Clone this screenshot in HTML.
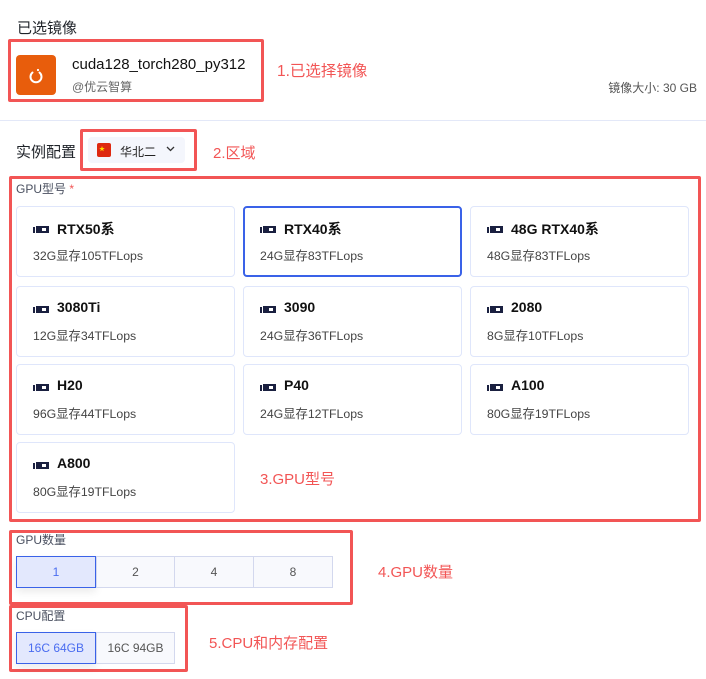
<!DOCTYPE html>
<html><head><meta charset="utf-8"><style>
*{margin:0;padding:0;box-sizing:border-box}
body{width:706px;height:679px;background:#fff;position:relative;overflow:hidden;font-family:"Liberation Sans","Noto Sans CJK SC",sans-serif;color:#1f2329}
.a{position:absolute;white-space:nowrap}
.red{position:absolute;border:3px solid #f25555;border-radius:2px}
.rl{position:absolute;color:#f25555;font-size:15px;white-space:nowrap}
.card{position:absolute;width:219px;height:71px;border:1px solid #dfe6fb;border-radius:4px;background:#fff}
.card.sel{border:2px solid #3a62e8}
.card .t{position:absolute;left:40px;top:12px;font-size:14px;font-weight:bold;color:#111}
.card .s{position:absolute;left:16px;top:39px;font-size:12.3px;color:#444}
.card .ic{position:absolute;left:16px;top:19px;width:17px;height:7px}
.card.sel .t{left:39px;top:11px}.card.sel .s{left:15px;top:38px}.card.sel .ic{left:15px;top:18px}
.btn{position:absolute;height:32px;border:1px solid #d3d8ee;background:#f8f9fd;font-size:12px;color:#555;text-align:center;line-height:30px;font-family:"Liberation Sans",sans-serif}
.btn.on{background:#e3e8fd;border:1px solid #3a62e8;color:#4a6cf0;box-shadow:0 4px 8px rgba(0,0,0,.08)}
.lab{position:absolute;font-size:12px;color:#4a5060}
</style></head><body>
<div class="a" style="left:17px;top:17px;font-size:15px">已选镜像</div>
<div class="red" style="left:8px;top:39px;width:256px;height:63px"></div>
<div class="a" style="left:16px;top:55px;width:40px;height:40px;background:#e85d0c;border-radius:4px">
<svg width="40" height="40" viewBox="0 0 40 40"><path d="M16.5 17.5a5.5 5.5 0 1 0 7 0" fill="none" stroke="#fff" stroke-width="2" stroke-linecap="round"/><circle cx="22" cy="15" r="1.1" fill="#fff"/></svg></div>
<div class="a" style="left:72px;top:56px;font-size:15px;color:#111">cuda128_torch280_py312</div>
<div class="a" style="left:72px;top:78px;font-size:12px;color:#666">@优云智算</div>
<div class="rl" style="left:277px;top:59px;font-size:15.5px">1.已选择镜像</div>
<div class="a" style="right:9px;top:79px;font-size:12px;color:#555">镜像大小: 30 GB</div>
<div class="a" style="left:0;top:120px;width:706px;height:1px;background:#e3e8f8"></div>
<div class="a" style="left:16px;top:141px;font-size:15px">实例配置</div>
<div class="red" style="left:80px;top:129px;width:117px;height:42px"></div>
<div class="a" style="left:88px;top:137px;width:97px;height:26px;background:#f4f6fc;border-radius:4px"></div>
<div class="a" style="left:97px;top:143px;width:14px;height:14px;background:#de2910;border-radius:2px"><span style="position:absolute;left:2px;top:1px;color:#ffde00;font-size:6px">★</span></div>
<div class="a" style="left:120px;top:143px;font-size:12px;color:#222">华北二</div>
<svg class="a" style="left:166px;top:146px" width="9" height="6" viewBox="0 0 9 6"><path d="M1 1l3.5 3.5L8 1" fill="none" stroke="#333" stroke-width="1.3"/></svg>
<div class="rl" style="left:213px;top:142px">2.区域</div>
<div class="red" style="left:9px;top:176px;width:692px;height:346px"></div>
<div class="lab" style="left:16px;top:180px;font-size:12px">GPU型号 <span style="color:#f25555">*</span></div>

<div class="card" style="left:16px;top:206px"><svg class="ic" viewBox="0 0 17 7"><rect x="0" y="1" width="2" height="6" fill="#1a2040"/><rect x="3" y="0" width="13" height="7" fill="#1a2040"/><rect x="9" y="2" width="4" height="3" fill="#fff"/></svg><div class="t">RTX50系</div><div class="s">32G显存105TFLops</div></div>
<div class="card sel" style="left:243px;top:206px"><svg class="ic" viewBox="0 0 17 7"><rect x="0" y="1" width="2" height="6" fill="#1a2040"/><rect x="3" y="0" width="13" height="7" fill="#1a2040"/><rect x="9" y="2" width="4" height="3" fill="#fff"/></svg><div class="t">RTX40系</div><div class="s">24G显存83TFLops</div></div>
<div class="card" style="left:470px;top:206px"><svg class="ic" viewBox="0 0 17 7"><rect x="0" y="1" width="2" height="6" fill="#1a2040"/><rect x="3" y="0" width="13" height="7" fill="#1a2040"/><rect x="9" y="2" width="4" height="3" fill="#fff"/></svg><div class="t">48G RTX40系</div><div class="s">48G显存83TFLops</div></div>

<div class="card" style="left:16px;top:286px"><svg class="ic" viewBox="0 0 17 7"><rect x="0" y="1" width="2" height="6" fill="#1a2040"/><rect x="3" y="0" width="13" height="7" fill="#1a2040"/><rect x="9" y="2" width="4" height="3" fill="#fff"/></svg><div class="t">3080Ti</div><div class="s">12G显存34TFLops</div></div>
<div class="card" style="left:243px;top:286px"><svg class="ic" viewBox="0 0 17 7"><rect x="0" y="1" width="2" height="6" fill="#1a2040"/><rect x="3" y="0" width="13" height="7" fill="#1a2040"/><rect x="9" y="2" width="4" height="3" fill="#fff"/></svg><div class="t">3090</div><div class="s">24G显存36TFLops</div></div>
<div class="card" style="left:470px;top:286px"><svg class="ic" viewBox="0 0 17 7"><rect x="0" y="1" width="2" height="6" fill="#1a2040"/><rect x="3" y="0" width="13" height="7" fill="#1a2040"/><rect x="9" y="2" width="4" height="3" fill="#fff"/></svg><div class="t">2080</div><div class="s">8G显存10TFLops</div></div>

<div class="card" style="left:16px;top:364px"><svg class="ic" viewBox="0 0 17 7"><rect x="0" y="1" width="2" height="6" fill="#1a2040"/><rect x="3" y="0" width="13" height="7" fill="#1a2040"/><rect x="9" y="2" width="4" height="3" fill="#fff"/></svg><div class="t">H20</div><div class="s">96G显存44TFLops</div></div>
<div class="card" style="left:243px;top:364px"><svg class="ic" viewBox="0 0 17 7"><rect x="0" y="1" width="2" height="6" fill="#1a2040"/><rect x="3" y="0" width="13" height="7" fill="#1a2040"/><rect x="9" y="2" width="4" height="3" fill="#fff"/></svg><div class="t">P40</div><div class="s">24G显存12TFLops</div></div>
<div class="card" style="left:470px;top:364px"><svg class="ic" viewBox="0 0 17 7"><rect x="0" y="1" width="2" height="6" fill="#1a2040"/><rect x="3" y="0" width="13" height="7" fill="#1a2040"/><rect x="9" y="2" width="4" height="3" fill="#fff"/></svg><div class="t">A100</div><div class="s">80G显存19TFLops</div></div>

<div class="card" style="left:16px;top:442px"><svg class="ic" viewBox="0 0 17 7"><rect x="0" y="1" width="2" height="6" fill="#1a2040"/><rect x="3" y="0" width="13" height="7" fill="#1a2040"/><rect x="9" y="2" width="4" height="3" fill="#fff"/></svg><div class="t">A800</div><div class="s">80G显存19TFLops</div></div>
<div class="rl" style="left:260px;top:468px">3.GPU型号</div>

<div class="red" style="left:9px;top:530px;width:344px;height:75px"></div>
<div class="lab" style="left:16px;top:531px">GPU数量</div>
<div class="btn on" style="left:16px;top:556px;width:80px">1</div>
<div class="btn" style="left:96px;top:556px;width:79px">2</div>
<div class="btn" style="left:174px;top:556px;width:80px">4</div>
<div class="btn" style="left:253px;top:556px;width:80px">8</div>
<div class="rl" style="left:378px;top:561px">4.GPU数量</div>

<div class="red" style="left:9px;top:605px;width:179px;height:67px"></div>
<div class="lab" style="left:16px;top:607px">CPU配置</div>
<div class="btn on" style="left:16px;top:632px;width:80px">16C 64GB</div>
<div class="btn" style="left:96px;top:632px;width:79px">16C 94GB</div>
<div class="rl" style="left:209px;top:632px">5.CPU和内存配置</div>
</body></html>
